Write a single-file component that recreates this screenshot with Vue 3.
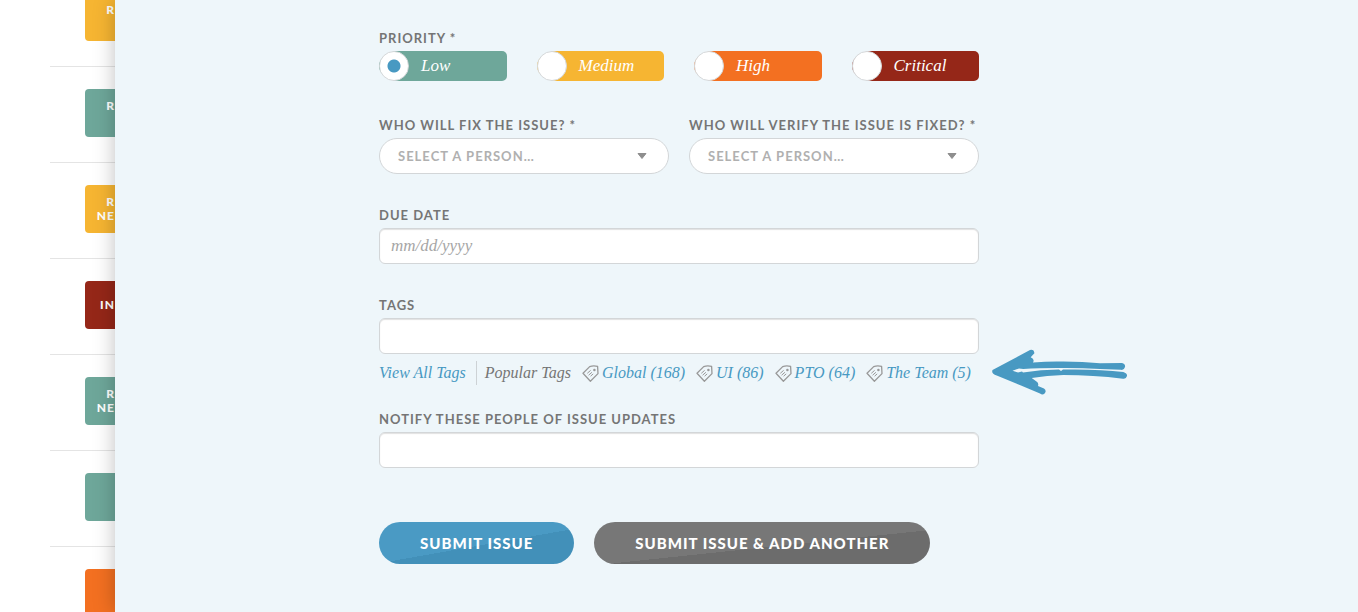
<script setup>
import { ref } from 'vue'

// Issue list rows visible behind the panel
const issues = [
  { tone: 'medium', lines: ['R', ''] },
  { tone: 'low', lines: ['R', ''] },
  { tone: 'medium', lines: ['R', 'NE'] },
  { tone: 'critical', lines: ['IN'] },
  { tone: 'low', lines: ['R', 'NE'] },
  { tone: 'low', lines: [] },
  { tone: 'high', lines: [] },
]

const priorities = [
  { value: 'low', label: 'Low' },
  { value: 'medium', label: 'Medium' },
  { value: 'high', label: 'High' },
  { value: 'critical', label: 'Critical' },
]

const people = [
  { id: 'fixer', label: 'Who will fix the issue? *' },
  { id: 'verifier', label: 'Who will verify the issue is fixed? *' },
]

const popularTags = [
  { name: 'Global', count: 168 },
  { name: 'UI', count: 86 },
  { name: 'PTO', count: 64 },
  { name: 'The Team', count: 5 },
]

const priority = ref('low')
const assigned = ref({ fixer: '', verifier: '' })
const dueDate = ref('')
const tags = ref('')
const notify = ref('')

function addTag(name) {
  tags.value = tags.value ? `${tags.value}, ${name}` : name
}
</script>

<template>
  <div class="page">
    <aside class="issues">
      <ul class="issue-list">
        <li v-for="(issue, i) in issues" :key="i" class="issue">
          <div class="badge" :class="issue.tone">
            <span v-for="(line, n) in issue.lines" :key="n" class="badge-line">{{ line }}</span>
          </div>
        </li>
      </ul>
    </aside>

    <main class="panel">
      <form class="form" @submit.prevent>
        <fieldset class="priority">
          <legend class="label">Priority *</legend>
          <div class="pills">
            <label v-for="p in priorities" :key="p.value" class="pill" :class="p.value">
              <input v-model="priority" class="radio" type="radio" name="priority" :value="p.value">
              <span>{{ p.label }}</span>
            </label>
          </div>
        </fieldset>

        <div class="people">
          <div v-for="person in people" :key="person.id">
            <label class="label" :for="person.id">{{ person.label }}</label>
            <div class="select-wrap">
              <select :id="person.id" v-model="assigned[person.id]" class="select">
                <option value="">SELECT A PERSON…</option>
              </select>
              <svg class="caret" viewBox="0 0 10 6" width="10" height="6" aria-hidden="true">
                <path d="M1 .5h8L5 5.5z" />
              </svg>
            </div>
          </div>
        </div>

        <div class="field">
          <label class="label" for="due">Due date</label>
          <input id="due" v-model="dueDate" class="input" type="text" placeholder="mm/dd/yyyy">
        </div>

        <div class="field">
          <label class="label" for="tags">Tags</label>
          <div class="tags-box">
            <input id="tags" v-model="tags" class="input" type="text">
            <svg class="arrow" viewBox="0 0 136 46" width="136" height="46" aria-hidden="true">
              <path d="M1.5 21 39 1Q43 0 43.4 4.3L39.7 8.3Q44 10 42 13.6Q58 12.2 72.3 12.6Q92 12.8 109 14.2L131 14Q134.6 15 134 18Q133 21.4 130 20.8L109 19.9Q90 18.9 72.3 19Q50 18.8 32.3 20L28 19.4 21.5 21.8 27 23.4 31 22.4 32 23.6Q50 20.6 68 20.6L70 22 72 20.6Q108 20 132.3 23Q136.6 24.5 136 27Q135 30.4 132 29.7Q102 26 72.3 26Q56 26.4 40.7 29L45.5 32.4Q48 34 47 37L53 39.6Q56 42 53.6 44.6Q51.5 46.4 49 44.6L30 36.6 5.7 26.4Q0 24.5 1.5 21Z" />
            </svg>
          </div>
          <div class="tag-row">
            <a class="link view-all" href="#tags">View All Tags</a>
            <span class="popular">Popular Tags</span>
            <a v-for="tag in popularTags" :key="tag.name" class="link tag" href="#tags" @click.prevent="addTag(tag.name)">
              <svg class="tag-icon" viewBox="0 0 17 17" width="17" height="17" aria-hidden="true">
                <path d="M1 8.2 7.7 1.6Q11.5.3 15.6 1.4L16 8.6 8.4 16.2Z" />
                <path class="tag-lines" d="M5.3 8.3 8.6 5.4M6.6 10.2 9.9 7.3M8.6 11.2 11.2 8.9" />
                <circle cx="12.4" cy="5" r=".6" />
              </svg>
              {{ tag.name }} ({{ tag.count }})
            </a>
          </div>
        </div>

        <div class="field notify">
          <label class="label" for="notify">Notify these people of issue updates</label>
          <input id="notify" v-model="notify" class="input" type="text">
        </div>

        <div class="actions">
          <button class="btn primary" type="submit">Submit issue</button>
          <button class="btn secondary" type="button">Submit issue &amp; add another</button>
        </div>
      </form>
    </main>
  </div>
</template>

<style>
body {
  margin: 0;
  background: #fff;
}
</style>

<style scoped>
.page {
  display: flex;
  height: 100vh;
  overflow: hidden;
  font-family: Lato, sans-serif;
  color: #757575;
}

.low {
  background: #6ea79a;
}

.medium {
  background: #f6b532;
}

.high {
  background: #f37021;
}

.critical {
  background: #952718;
}

/* Issue list */
.issues {
  flex: 0 0 115px;
  overflow: hidden;
}

.issue-list {
  list-style: none;
  margin: -29px 0 0 50px;
  padding: 0;
}

.issue {
  padding: 22px 0 25px 35px;
  border-bottom: 1px solid #e4e4e4;
}

.badge {
  display: flex;
  flex-direction: column;
  align-items: flex-end;
  justify-content: center;
  height: 48px;
  border-radius: 4px 0 0 4px;
  color: #fff;
  font-size: 12px;
  font-weight: 900;
  letter-spacing: 1px;
}

.badge-line {
  height: 14px;
  line-height: 14px;
}

/* Panel */
.panel {
  position: relative;
  flex: 1;
  padding: 28px 115px 48px 0;
  background: #eef6fa;
  box-shadow: 0 0 20px rgba(0, 0, 0, 0.25);
}

.form {
  max-width: 600px;
  margin: 0 auto;
}

.label {
  display: block;
  margin-bottom: 3px;
  padding: 0;
  font-size: 13px;
  font-weight: 700;
  line-height: 20px;
  letter-spacing: 1px;
  text-transform: uppercase;
  white-space: nowrap;
}

.priority {
  margin: 0;
  padding: 0;
  border: 0;
}

.pills {
  display: grid;
  grid-template-columns: repeat(4, 1fr);
  gap: 30px;
}

/* The wide left curve keeps the colour from showing round the radio */
.pill {
  display: flex;
  align-items: center;
  gap: 12px;
  height: 30px;
  border-radius: 20px 5px 5px 20px / 15px 5px 5px 15px;
  color: #fff;
  font-family: "Liberation Serif", serif;
  font-size: 17px;
  font-style: italic;
  line-height: 30px;
  cursor: pointer;
}

.radio {
  appearance: none;
  width: 30px;
  height: 30px;
  margin: 0;
  border: 1px solid #d5d8da;
  border-radius: 50%;
  background: #fff;
  cursor: pointer;
}

.radio:checked {
  background: radial-gradient(circle, #4899c2 6px, #fff 7px);
}

.people {
  display: grid;
  grid-template-columns: repeat(2, minmax(0, 1fr));
  gap: 20px;
  margin-top: 34px;
}

.select-wrap {
  position: relative;
}

.select {
  display: block;
  appearance: none;
  box-sizing: border-box;
  width: 100%;
  height: 36px;
  padding: 0 40px 0 18px;
  border: 1px solid #d3d6d8;
  border-radius: 18px;
  background: #fff;
  color: #b0b0b0;
  font-family: inherit;
  font-size: 13px;
  font-weight: 700;
  letter-spacing: 1px;
}

.caret {
  position: absolute;
  top: 15px;
  right: 22px;
  fill: #8e8e8e;
  stroke: #8e8e8e;
  stroke-linejoin: round;
  pointer-events: none;
}

.field {
  margin-top: 31px;
}

.input {
  display: block;
  box-sizing: border-box;
  width: 100%;
  height: 36px;
  padding: 0 11px;
  border: 1px solid #d3d6d8;
  border-radius: 6px;
  background: #fff;
  box-shadow: inset 0 1px 1px rgba(0, 0, 0, 0.12);
  color: #6f6f6f;
  font-family: "Liberation Serif", serif;
  font-size: 17px;
  font-style: italic;
}

.input::placeholder {
  color: #a6a6a6;
  opacity: 1;
}

.tags-box {
  position: relative;
}

/* Hand-drawn arrow pointing at the popular tags */
.arrow {
  position: absolute;
  top: 31px;
  left: calc(100% + 12px);
  overflow: visible;
  fill: #4899c2;
}

.tag-row {
  display: flex;
  align-items: center;
  justify-content: space-between;
  margin-top: 7px;
  padding-right: 8px;
  font-family: "Liberation Serif", serif;
  font-size: 16px;
  font-style: italic;
  line-height: 24px;
  white-space: nowrap;
}

.link {
  color: #4899c2;
  text-decoration: none;
}

.link:hover {
  text-decoration: underline;
}

.view-all {
  margin-right: -3px;
  padding-right: 10px;
  border-right: 1px solid #cdd2d5;
}

.tag {
  display: flex;
  align-items: center;
  gap: 3px;
}

.tag-icon {
  fill: none;
  stroke: #999;
  stroke-width: 1.3;
  stroke-linejoin: round;
}

.tag-lines {
  stroke-width: 1;
}

.notify {
  margin-top: 24px;
}

.actions {
  display: flex;
  gap: 20px;
  margin-top: 54px;
}

.btn {
  height: 42px;
  padding: 0 41px;
  border: 0;
  border-radius: 21px;
  color: #fff;
  font-family: inherit;
  font-size: 15px;
  font-weight: 900;
  letter-spacing: 1px;
  text-transform: uppercase;
  white-space: nowrap;
  cursor: pointer;
}

.primary {
  background: linear-gradient(170deg, #4a9ac4 54%, #4290b9 54%);
}

.secondary {
  background: linear-gradient(174deg, #777 56%, #6c6c6c 56%);
}
</style>
